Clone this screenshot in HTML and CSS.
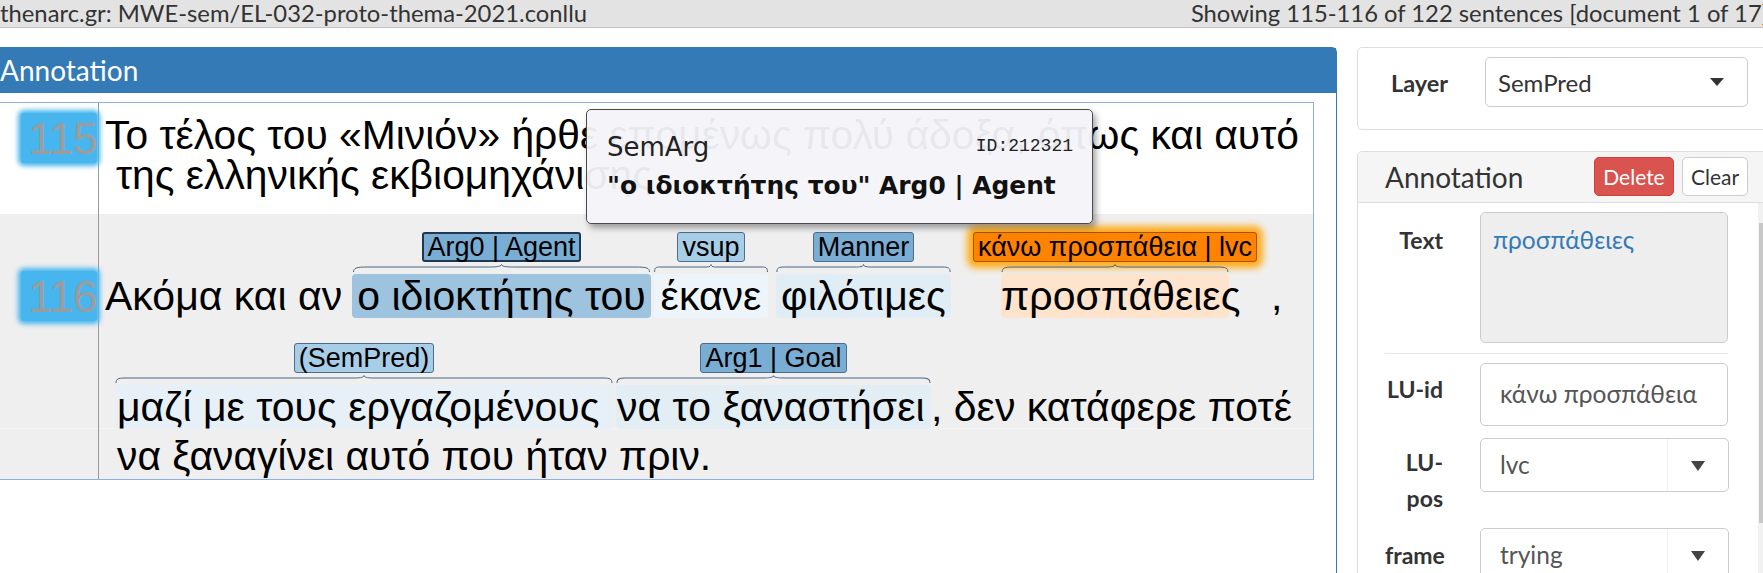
FILE: index.html
```html
<!DOCTYPE html>
<html lang="el">
<head>
<meta charset="utf-8">
<title>Annotation</title>
<link rel="stylesheet" href="styles.css">
</head>
<body>
<div class="topbar">
  <span class="doc">thenarc.gr: MWE-sem/EL-032-proto-thema-2021.conllu</span>
  <span class="status">Showing 115-116 of 122 sentences [document 1 of 17]</span>
</div>
<div class="main">
  <section class="panel">
    <div class="panel-heading">Annotation</div>
    <div class="panel-body">
      <div class="brat">
        <div class="sent s115">
          <div class="num"><span class="badge">115</span></div>
          <div class="lines">
            <div class="tline">Το τέλος του «Μινιόν» ήρθε επομένως πολύ άδοξα, όπως και αυτό</div>
            <div class="tline cont">της ελληνικής εκβιομηχάνισης.</div>
          </div>
        </div>
        <div class="sent s116">
          <div class="num"><span class="badge">116</span></div>
          <div class="lines">
            <div class="aline">
              <span class="plain pre1">Ακόμα και αν</span>
              <span class="chunk">
                <span class="lbl mid sel">Arg0 | Agent</span>
                <span class="wbox">
                  <svg class="brace" viewBox="0 0 100 8" preserveAspectRatio="none"><path d="M0.5,8 C0.5,4 1.5,3 5,3 L46,3 C49,3 50,2 50,0.5 C50,2 51,3 54,3 L95,3 C98.5,3 99.5,4 99.5,8" vector-effect="non-scaling-stroke"/></svg>
                  <span class="word hl-sel w-arg0">ο ιδιοκτήτης του</span>
                </span>
              </span>
              <span class="chunk g3">
                <span class="lbl light">vsup</span>
                <span class="wbox">
                  <svg class="brace" viewBox="0 0 100 8" preserveAspectRatio="none"><path d="M0.5,8 C0.5,4 1.5,3 5,3 L46,3 C49,3 50,2 50,0.5 C50,2 51,3 54,3 L95,3 C98.5,3 99.5,4 99.5,8" vector-effect="non-scaling-stroke"/></svg>
                  <span class="word hl-faint w-ekane">έκανε</span>
                </span>
              </span>
              <span class="chunk g8">
                <span class="lbl mid">Manner</span>
                <span class="wbox">
                  <svg class="brace" viewBox="0 0 100 8" preserveAspectRatio="none"><path d="M0.5,8 C0.5,4 1.5,3 5,3 L46,3 C49,3 50,2 50,0.5 C50,2 51,3 54,3 L95,3 C98.5,3 99.5,4 99.5,8" vector-effect="non-scaling-stroke"/></svg>
                  <span class="word hl-pale w-filo">φιλότιμες</span>
                </span>
              </span>
              <span class="chunk g22">
                <span class="lbl orange">κάνω προσπάθεια | lvc</span>
                <span class="wbox">
                  <svg class="brace" viewBox="0 0 100 8" preserveAspectRatio="none"><path d="M0.5,8 C0.5,4 1.5,3 5,3 L46,3 C49,3 50,2 50,0.5 C50,2 51,3 54,3 L95,3 C98.5,3 99.5,4 99.5,8" vector-effect="non-scaling-stroke"/></svg>
                  <span class="word hl-peach w-prosp">προσπάθειες</span>
                </span>
              </span>
              <span class="plain comma">,</span>
            </div>
            <div class="aline second">
              <span class="chunk">
                <span class="lbl light">(SemPred)</span>
                <span class="wbox">
                  <svg class="brace" viewBox="0 0 100 8" preserveAspectRatio="none"><path d="M0.2,8 C0.2,4 0.6,3 2,3 L48,3 C49.5,3 50,2 50,0.5 C50,2 50.5,3 52,3 L98,3 C99.4,3 99.8,4 99.8,8" vector-effect="non-scaling-stroke"/></svg>
                  <span class="word hl-line w-mazi">μαζί με τους εργαζομένους</span>
                </span>
              </span>
              <span class="chunk g3">
                <span class="lbl mid">Arg1 | Goal</span>
                <span class="wbox">
                  <svg class="brace" viewBox="0 0 100 8" preserveAspectRatio="none"><path d="M0.3,8 C0.3,4 1,3 3,3 L47,3 C49,3 50,2 50,0.5 C50,2 51,3 53,3 L97,3 C99,3 99.7,4 99.7,8" vector-effect="non-scaling-stroke"/></svg>
                  <span class="word hl-goal w-na">να το ξαναστήσει</span>
                </span>
              </span>
              <span class="plain">, δεν κατάφερε ποτέ</span>
            </div>
            <div class="tline l3">να ξαναγίνει αυτό που ήταν πριν.</div>
          </div>
        </div>
      </div>
    </div>
  </section>

  <aside class="side">
    <div class="card layer-card">
      <span class="layer-label">Layer</span>
      <div class="select wide"><span>SemPred</span><span class="caret"></span></div>
    </div>

    <div class="card anno-card">
      <div class="anno-head">
        <span class="anno-title">Annotation</span>
        <button class="btn btn-del">Delete</button>
        <button class="btn btn-clear">Clear</button>
      </div>
      <div class="anno-body">
        <div class="form">
          <div class="frow">
            <label class="flabel l-text">Text</label>
            <div class="ctl textarea">προσπάθειες</div>
          </div>
          <div class="sep"></div>
          <div class="frow">
            <label class="flabel l-luid">LU-id</label>
            <div class="ctl input">κάνω προσπάθεια</div>
          </div>
          <div class="frow">
            <label class="flabel l-lupos">LU-pos</label>
            <div class="ctl select2"><span class="val">lvc</span><span class="arrow"><span class="caret"></span></span></div>
          </div>
          <div class="frow">
            <label class="flabel l-frame">frame</label>
            <div class="ctl select2"><span class="val">trying</span><span class="arrow"><span class="caret"></span></span></div>
          </div>
        </div>
        <div class="scrollbar"><span class="sb-up"></span><span class="sb-thumb"></span></div>
      </div>
    </div>
  </aside>
</div>

<div class="tip">
  <div class="tip-head"><span class="tip-type">SemArg</span><span class="tip-id">ID:212321</span></div>
  <div class="tip-text">"ο ιδιοκτήτης του" Arg0 | Agent</div>
</div>
</body>
</html>
```

FILE: styles.css
```css
* { box-sizing: border-box; }
html, body { margin: 0; padding: 0; }
body {
  width: 1763px;
  height: 573px;
  overflow: hidden;
  position: relative;
  background: #fff;
  font-family: Lato, "Open Sans", sans-serif;
  color: #333;
}

/* top status bar */
.topbar {
  height: 28px;
  background: #e3e3e3;
  border-bottom: 1px solid #c2c2c2;
  display: flex;
  justify-content: space-between;
  white-space: nowrap;
  font-size: 23.8px;
  line-height: 26px;
  color: #333;
}
.status { margin-right: -6px; }

.main {
  display: flex;
  align-items: flex-start;
  margin-top: 19px;
}

/* left annotation panel */
.panel {
  flex: none;
  width: 1358px;
  height: 540px;
  margin-left: -21px;
  border: 1px solid #337ab7;
  border-radius: 0 5px 0 0;
}
.panel-heading {
  height: 45px;
  background: #337ab7;
  color: #fff;
  font-size: 28px;
  line-height: 44px;
  padding-left: 20px;
}
.panel-body { padding: 9px 22px 0 0; }

.brat {
  border: 1px solid #8eaee8;
  font-family: "Liberation Sans", Arial, sans-serif;
  color: #000;
}
.sent { display: flex; }
.s115 { height: 111px; background: #fff; }
.s116 {
  height: 265px;
  background: linear-gradient(to bottom, #efefef 214px, #f4f4f4 214px, #f4f4f4 215px, #efefef 215px);
}

.num {
  flex: none;
  width: 118px;
  border-right: 1px solid #9a9a9a;
  display: flex;
  justify-content: flex-end;
  align-items: flex-start;
  padding-right: 1px;
}
.badge {
  width: 76px;
  height: 50px;
  margin-top: 10px;
  background: #48b6ee;
  box-shadow: 0 0 5px 3px #48b6ee;
  border-radius: 3px;
  font-size: 44px;
  line-height: 52px;
  color: #9c9c9c;
  text-align: right;
  padding-right: 0;
  letter-spacing: -0.5px;
}
.s116 .badge { margin-top: 57px; }

.lines { padding-left: 6px; white-space: nowrap; }
.s115 .lines { padding-top: 12px; }
.s116 .lines { padding-top: 18px; }

.tline { font-size: 40.8px; line-height: 40px; }
.cont { padding-left: 11px; }
.l3 { padding-left: 12px; line-height: 44px; margin-top: 5px; }

.aline { display: flex; align-items: flex-end; }
.aline + .aline { margin-top: 25px; }
.second { padding-left: 10px; }

.plain, .word {
  display: block;
  font-size: 41px;
  line-height: 44px;
  height: 44px;
}
.pre1 { width: 247px; }
.comma { margin-left: 14px; }

.chunk { display: flex; flex-direction: column; align-items: center; }
.g3 { margin-left: 3px; }
.g8 { margin-left: 8px; }
.g22 { margin-left: 22px; }

.lbl {
  display: block;
  height: 30px;
  font-size: 27px;
  line-height: 28px;
  padding: 0 4px;
  border: 1px solid #4d6d8a;
  border-radius: 3px;
  margin-bottom: 2px;
  color: #000;
}
.lbl.mid { background: #7aadd4; }
.lbl.light { background: #a8cde7; }
.lbl.sel { border: 2px solid #1d3850; line-height: 26px; padding: 0 3px; }
.lbl.orange {
  background: #ff8200;
  border-color: #a35500;
  box-shadow: 0 0 7px 6px #ffab1a;
}

.wbox { display: flex; flex-direction: column; }
.brace { display: block; width: 100%; height: 8px; margin-bottom: 2px; overflow: visible; }
.brace path { fill: none; stroke: #4a6580; stroke-width: 1; }

.word { text-align: center; border-radius: 4px; }
.hl-sel { background: #9ec3de; }
.hl-faint { background: #eef5fa; }
.hl-pale { background: #e1edf5; }
.hl-peach { background: #fee4cd; }
.hl-line { background: #e6f0f6; text-align: left; padding-left: 2px; }
.hl-goal { background: #e2edf4; text-align: left; padding-left: 1px; }

.w-arg0 { width: 299px; }
.w-ekane { width: 114px; }
.w-filo { width: 175px; }
.w-prosp { width: 228px; }
.w-mazi { width: 498px; }
.w-na { width: 315px; }

/* tooltip */
.tip {
  position: absolute;
  left: 586px;
  top: 109px;
  width: 507px;
  height: 115px;
  background: rgba(244, 244, 249, 0.95);
  border: 1px solid #4a4a4a;
  border-radius: 5px;
  box-shadow: 3px 4px 6px rgba(0, 0, 0, 0.35);
  padding: 19px 19px 0 20px;
  color: #111;
}
.tip-head { display: flex; justify-content: space-between; align-items: baseline; height: 36px; }
.tip-type { font-family: "DejaVu Sans", sans-serif; font-size: 26px; line-height: 36px; color: #222; }
.tip-id { font-family: "Liberation Mono", monospace; font-size: 18px; color: #222; position: relative; top: -5px; }
.tip-text { font-family: "DejaVu Sans", sans-serif; font-weight: bold; font-size: 24.9px; line-height: 41px; white-space: nowrap; }

/* sidebar */
.side { flex: none; width: 419px; margin-left: 20px; }
.card { border: 1px solid #dddddd; border-radius: 5px; background: #fff; }
.layer-card {
  height: 83px;
  display: flex;
  align-items: flex-start;
  padding: 9px 0 0 33px;
}
.layer-label { width: 94px; font-weight: bold; font-size: 23.5px; line-height: 52px; color: #333; }
.select {
  width: 263px;
  height: 50px;
  border: 1px solid #cccccc;
  border-radius: 5px;
  display: flex;
  align-items: center;
  justify-content: space-between;
  padding: 0 23px 0 12px;
  font-size: 24px;
  color: #333;
}
.caret {
  display: block;
  width: 0;
  height: 0;
  border-top: 8px solid #333;
  border-left: 7px solid transparent;
  border-right: 7px solid transparent;
}

.anno-card { margin-top: 21px; height: 480px; overflow: hidden; }
.anno-head {
  height: 51px;
  background: #f5f5f5;
  border-bottom: 1px solid #dddddd;
  border-radius: 5px 5px 0 0;
  display: flex;
  align-items: flex-start;
  padding: 5px 27px 0 27px;
}
.anno-title { flex: 1; font-size: 28px; line-height: 40px; color: #333; }
.btn {
  height: 39px;
  border-radius: 5px;
  font-family: Lato, "Open Sans", sans-serif;
  font-size: 21px;
  padding: 0;
}
.btn-del { width: 80px; background: #d9534f; border: 1px solid #d43f3a; color: #fff; }
.btn-clear { width: 66px; margin-left: 8px; background: #fff; border: 1px solid #cccccc; color: #333; }

.anno-body { display: flex; height: 430px; }
.form { flex: 1; padding: 9px 0 0 27px; }
.scrollbar {
  flex: none;
  width: 17px;
  background: #f1f1f1;
  display: flex;
  flex-direction: column;
  align-items: center;
}
.sb-up {
  margin-top: 6px;
  width: 0;
  height: 0;
  border-bottom: 4px solid #a3a3a3;
  border-left: 4px solid transparent;
  border-right: 4px solid transparent;
}
.sb-thumb { margin-top: 10px; width: 15px; height: 300px; background: #c8c8c8; }

.frow { display: flex; align-items: flex-start; margin-bottom: 12px; }
.flabel {
  flex: none;
  width: 58px;
  margin-right: 37px;
  text-align: right;
  font-weight: bold;
  font-size: 23px;
  line-height: 36px;
  color: #333;
}
.l-text { padding-top: 10px; }
.l-luid { padding-top: 8px; white-space: nowrap; }
.l-lupos { padding-top: 6px; }
.l-frame { padding-top: 9px; }

.ctl {
  width: 248px;
  border: 1px solid #cccccc;
  border-radius: 5px;
  font-size: 24.5px;
}
.textarea {
  height: 131px;
  background: #eeeeee;
  color: #337ab7;
  padding: 0 12px;
  line-height: 54px;
}
.sep { width: 343px; height: 1px; background: #e6e6e6; margin: -2px 0 9px; }
.input { height: 63px; line-height: 60px; padding-left: 19px; color: #555; }
.select2 {
  height: 54px;
  display: flex;
  align-items: stretch;
  color: #555;
  width: 249px;
}
.select2 .val { flex: 1; line-height: 52px; padding-left: 19px; }
.select2 .arrow {
  width: 61px;
  border-left: 1px solid #f0f0f0;
  display: flex;
  align-items: center;
  justify-content: center;
}
.select2 .caret { border-top-width: 10px; border-left-width: 7px; border-right-width: 7px; border-top-color: #444; margin-top: 2px; }
```
